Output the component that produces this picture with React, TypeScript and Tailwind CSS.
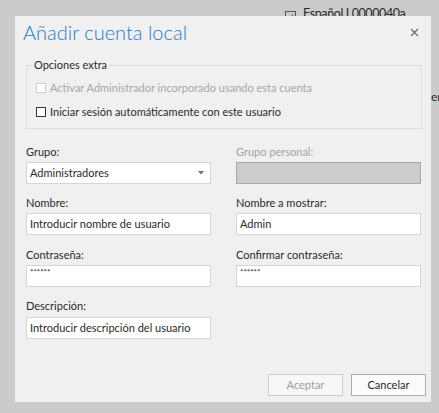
import React from "react";

const font = { fontFamily: 'Lato, "Noto Sans", sans-serif' };

function Label({ children, disabled }: { children: React.ReactNode; disabled?: boolean }) {
  return (
    <div className={`h-[16px] whitespace-nowrap leading-[16px] text-[11px] ${disabled ? "text-[#a3a3a3]" : "text-[#2a2a2a]"}`}>
      {children}
    </div>
  );
}

function Input({ value, className = "" }: { value: string; className?: string }) {
  return (
    <div
      className={`h-[22px] w-[185px] overflow-hidden whitespace-nowrap border border-[#d6d6d6] bg-white pl-[3px] text-[#2a2a2a] ${className}`}
    >
      {value}
    </div>
  );
}

function Checkbox({ disabled }: { disabled?: boolean }) {
  return (
    <div
      className={`h-[10px] w-[10px] shrink-0 border bg-white ${disabled ? "border-[#cfcfcf]" : "border-[#333333]"}`}
    />
  );
}

export default function App() {
  return (
    <div className="relative h-[413px] w-[439px] overflow-hidden bg-[#cbcbcb]" style={font}>
      {/* background window content */}
      <div className="absolute left-[285px] top-[6px] flex items-center gap-[7px] text-[12.5px] leading-[16px] tracking-[-0.4px] text-[#2a2a2a]">
        <svg width="11" height="11" viewBox="0 0 11 11" className="mt-[4px]">
          <rect x="0.5" y="0.5" width="10" height="10" fill="none" stroke="#555" />
          <path d="M2.5 5.5 L4.5 7.5 L8.5 3" fill="none" stroke="#555" strokeWidth="1" />
        </svg>
        <span>Español I 0000040a</span>
      </div>
      <div className="absolute left-[431px] top-[89px] text-[12px] leading-[16px] text-[#2a2a2a]">er</div>

      {/* dialog */}
      <div className="absolute left-[15px] top-[16px] flex h-[386px] w-[416px] flex-col bg-[#f0f0f0]">
        <div className="flex h-[32px] items-center justify-between pl-[8px] pr-[12px]">
          <div className="text-[20px] font-light leading-[28px] text-[#2b79c2]">Añadir cuenta local</div>
          <svg width="9" height="9" viewBox="0 0 9 9">
            <path d="M1 1 L8 8 M8 1 L1 8" stroke="#6b6b6b" strokeWidth="1.2" />
          </svg>
        </div>

        <fieldset className="ml-[11px] mt-[9px] w-[396px] border border-[#dcdcdc] pl-[5px] pb-[4px]">
          <legend className="px-[2px] text-[11px] leading-[16px] text-[#2a2a2a]">Opciones extra</legend>
          <div className="pl-[4px] pt-[3px]">
            <div className="flex h-[24px] items-center gap-[4px]">
              <Checkbox disabled />
              <span className="whitespace-nowrap text-[11px] text-[#a6a6a6]">Activar Administrador incorporado usando esta cuenta</span>
            </div>
            <div className="flex h-[24px] items-center gap-[4px]">
              <Checkbox />
              <span className="whitespace-nowrap text-[11px] text-[#2a2a2a]">Iniciar sesión automáticamente con este usuario</span>
            </div>
          </div>
        </fieldset>

        <div className="ml-[11px] mt-[15px] flex flex-col">
          <div className="flex gap-[25px]">
            <div className="flex flex-col gap-[2px]">
              <Label>Grupo:</Label>
              <div className="flex h-[22px] w-[185px] items-center justify-between border border-[#d6d6d6] bg-white pl-[3px] pr-[6px] text-[11px] text-[#2a2a2a]">
                <span>Administradores</span>
                <svg width="6" height="4" viewBox="0 0 6 4">
                  <path d="M0 0 L6 0 L3 3.5 Z" fill="#707070" />
                </svg>
              </div>
            </div>
            <div className="flex flex-col gap-[2px]">
              <Label disabled>Grupo personal:</Label>
              <div className="h-[22px] w-[185px] border border-[#a8a8a8] bg-[#cccccc]" />
            </div>
          </div>

          <div className="mt-[11px] flex gap-[25px]">
            <div className="flex flex-col gap-[2px]">
              <Label>Nombre:</Label>
              <Input value="Introducir nombre de usuario" className="text-[11px] leading-[20px]" />
            </div>
            <div className="flex flex-col gap-[2px]">
              <Label>Nombre a mostrar:</Label>
              <Input value="Admin" className="text-[11px] leading-[20px]" />
            </div>
          </div>

          <div className="mt-[12px] flex gap-[25px]">
            <div className="flex flex-col gap-[2px]">
              <Label>Contraseña:</Label>
              <Input value="******" className="text-[8px] leading-[13px]" />
            </div>
            <div className="flex flex-col gap-[2px]">
              <Label>Confirmar contraseña:</Label>
              <Input value="******" className="text-[8px] leading-[13px]" />
            </div>
          </div>

          <div className="mt-[11px] flex flex-col gap-[3px]">
            <Label>Descripción:</Label>
            <Input value="Introducir descripción del usuario" className="text-[11px] leading-[20px]" />
          </div>
        </div>

        <div className="mt-auto flex justify-end gap-[8px] pb-[6px] pr-[5px]">
          <div className="flex h-[22px] w-[75px] items-center justify-center border border-[#cccccc] bg-[#f7f7f7] text-[11px] text-[#a0a0a0]">
            Aceptar
          </div>
          <div className="flex h-[22px] w-[75px] items-center justify-center border border-[#adadad] bg-[#fbfbfb] text-[11px] text-[#2a2a2a]">
            Cancelar
          </div>
        </div>
      </div>
    </div>
  );
}
